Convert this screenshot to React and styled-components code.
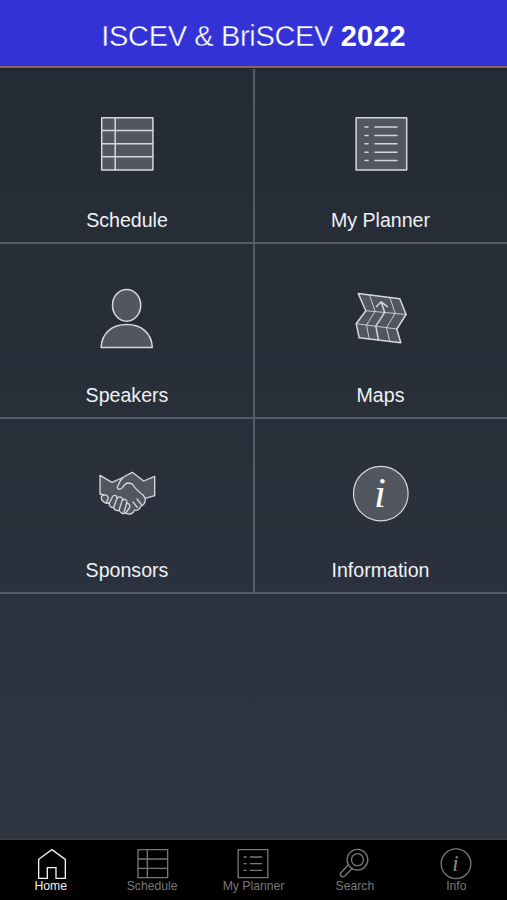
import React, { useState } from "react";
import styled, { createGlobalStyle } from "styled-components";

const GlobalStyle = createGlobalStyle`
  body {
    margin: 0;
    background: #2e3541;
  }
`;

const Container = styled.div`
  height: 100vh;
  min-height: 900px;
  display: flex;
  flex-direction: column;
  background: linear-gradient(#242a33, #2f3642);
  font-family: "Liberation Sans", Arial, sans-serif;
  overflow: hidden;
`;

const Header = styled.header`
  height: 66px;
  flex: none;
  display: flex;
  align-items: center;
  justify-content: center;
  background: #3232d6;
  border-bottom: 2px solid #8d6262;
  box-shadow: 0 1px 0 #1f2530;
`;

const Title = styled.h1`
  margin: 5px 0 0;
  font-size: 29px;
  font-weight: 400;
  line-height: 34px;
  letter-spacing: -0.35px;
  white-space: nowrap;
  color: #fff;
  -webkit-text-stroke: 0.4px #3232d6;
`;

const Year = styled.strong`
  font-weight: 700;
  letter-spacing: 0.1px;
  -webkit-text-stroke: 0;
`;

const Grid = styled.main`
  flex: 1;
  padding-top: 1px;
  display: grid;
  grid-template-columns: 255px 1fr;
  grid-template-rows: 175px 175px 175px;
`;

const Cell = styled.button`
  display: flex;
  flex-direction: column;
  align-items: center;
  padding: ${(props) => (props.$left ? "43px 0 0 1px" : "43px 1px 0 0")};
  border: none;
  border-bottom: 2px solid #565d68;
  border-right: ${(props) => (props.$left ? "2px solid #565d68" : "none")};
  background: none;
  font-family: inherit;
  cursor: pointer;
`;

const CellIcon = styled.svg`
  width: 64px;
  height: 64px;
  fill: #51565f;
  stroke: #d4d7dd;
  stroke-width: ${(props) => props.$stroke || 1.5};
  stroke-linejoin: round;
  stroke-linecap: round;
`;

const CellLabel = styled.span`
  margin-top: 33px;
  font-size: 19.6px;
  line-height: 23px;
  color: #eff1f5;
`;

const TabBar = styled.nav`
  height: 60px;
  flex: none;
  display: grid;
  grid-template-columns: repeat(5, 1fr);
  background: #000;
  border-top: 1px solid #3c3f45;
`;

const Tab = styled.button`
  display: flex;
  flex-direction: column;
  align-items: center;
  padding: 7px 0 0;
  border: none;
  background: none;
  font-family: inherit;
  color: ${(props) => (props.$active ? "#f2f2f2" : "#777")};
  cursor: pointer;
`;

const TabIcon = styled.svg`
  width: 34px;
  height: 34px;
  flex: none;
  fill: none;
  stroke: currentColor;
  stroke-width: 4;
`;

const TabLabel = styled.span`
  margin-top: -2px;
  font-size: 12.2px;
  line-height: 14px;
  white-space: nowrap;
`;

const InfoLetter = styled.text`
  font-family: "Liberation Serif", serif;
  font-style: italic;
  font-size: ${(props) => props.$size}px;
  fill: ${(props) => props.$color};
  stroke: none;
`;

const tiles = [
  {
    label: "Schedule",
    icon: (
      <CellIcon viewBox="0.5 0 64 64">
        <rect x="7.2" y="5.7" width="51.2" height="52.4" />
        <path d="M7.2 18.4h51.2M7.2 31.7h51.2M7.2 44.8h51.2M20.7 5.7v52.4" />
      </CellIcon>
    ),
  },
  {
    label: "My Planner",
    icon: (
      <CellIcon viewBox="0.5 0 64 64">
        <rect x="7.6" y="5.7" width="50.6" height="52.4" />
        <path d="M16.5 15h3M16.5 23.4h3M16.5 31.7h3M16.5 40.2h3M16.5 48.6h3M26.5 15h22M26.5 23.4h22M26.5 31.7h22M26.5 40.2h22M26.5 48.6h22" />
      </CellIcon>
    ),
  },
  {
    label: "Speakers",
    icon: (
      <CellIcon viewBox="0.5 0 64 64">
        <ellipse cx="32.1" cy="18.3" rx="14.1" ry="15.9" />
        <path d="M6.6 60.6C7.2 46 17.5 37.6 32.2 37.6S57.2 46 57.8 60.6Z" />
      </CellIcon>
    ),
  },
  {
    label: "Maps",
    icon: (
      <CellIcon viewBox="0.5 0 64 64">
        <path d="M9.7 6.5L51.3 11.7L57.6 27.5L48.3 42L52.3 55.7L10.7 50.8L7.7 36.7L17.3 23.7Z" />
        <path
          strokeWidth="0.9"
          d="M17.3 23.7L57.6 27.5M7.7 36.7L48.3 42M21 8L26.7 24.4L18 38L20.7 52M41.3 10.4L46.7 26.4L38 40.7L41.3 54.3"
        />
        <path
          fill="none"
          d="M32.7 15L36.2 25.4L27.3 39.2L30 52.8M28 19.6L32.7 14.8L38.8 19.6"
        />
      </CellIcon>
    ),
  },
  {
    label: "Sponsors",
    icon: (
      <CellIcon viewBox="46 21 192 192" $stroke={4}>
        <path d="M61 61L97 82L126 69L158 52L192 78L225 64V122L197 130C198 144 190 153 183 154C180 164 172 168 165 165C161 176 149 181 138 174C130 178 121 173 118 166C108 169 102 162 102 158C93 159 87 151 89 144C80 147 66 141 65 130C64 125 67 121 72 120L61 117Z" />
        <path
          fill="none"
          d="M130 68C120 77 116 88 113 97C113 105 123 104 129 97C133 90 139 84 146 84L158 87C165 100 178 111 190 120L197 130M72 120C79 119 85 122 86 129M89 144L98 126C103 117 116 122 111 132L102 158M111 132C119 120 132 127 127 138L118 166M127 138C133 128 144 134 141 144L133 172M141 146C149 144 153 152 149 159L138 174M86 129L80 143M160 141L173 157M172 132L185 149"
        />
      </CellIcon>
    ),
  },
  {
    label: "Information",
    icon: (
      <CellIcon viewBox="0.5 0 64 64" $stroke={1.2}>
        <circle cx="32.3" cy="31.6" r="27.3" />
        <InfoLetter x="25.4" y="45.3" $size={43} $color="#fff">
          i
        </InfoLetter>
      </CellIcon>
    ),
  },
];

const tabs = [
  {
    label: "Home",
    icon: (
      <TabIcon viewBox="101 51 102 102">
        <path d="M115 145V88L154.500 59L195 88V145H167V113H141V145Z" />
      </TabIcon>
    ),
  },
  {
    label: "Schedule",
    icon: (
      <TabIcon viewBox="405 51 102 102">
        <path d="M414 59H503V143H414ZM414 87H503M414 115H503M442 59V143" />
      </TabIcon>
    ),
  },
  {
    label: "My Planner",
    icon: (
      <TabIcon viewBox="109.5 51 102 102">
        <path d="M116 59H205V143H116ZM132 81H142M132 101H142M132 121H142M151 81H188M151 101H188M151 121H188" />
      </TabIcon>
    ),
  },
  {
    label: "Search",
    icon: (
      <TabIcon viewBox="413.7 51 102 102">
        <circle cx="472" cy="89" r="31" />
        <circle cx="472" cy="89" r="18" />
        <path d="M444 105L422 129C417 136 427 144 434 138L456 116" />
      </TabIcon>
    ),
  },
  {
    label: "Info",
    icon: (
      <TabIcon viewBox="118 51 102 102">
        <circle cx="169" cy="101" r="44.500" />
        <InfoLetter x="158" y="122" $size={68} $color="#8a8a8a">
          i
        </InfoLetter>
      </TabIcon>
    ),
  },
];

export default function App() {
  const [active, setActive] = useState("Home");

  return (
    <Container>
      <GlobalStyle />
      <Header>
        <Title>
          ISCEV &amp; BriSCEV <Year>2022</Year>
        </Title>
      </Header>
      <Grid>
        {tiles.map((tile, i) => (
          <Cell key={tile.label} $left={i % 2 === 0}>
            {tile.icon}
            <CellLabel>{tile.label}</CellLabel>
          </Cell>
        ))}
      </Grid>
      <TabBar>
        {tabs.map((tab) => (
          <Tab
            key={tab.label}
            $active={tab.label === active}
            onClick={() => setActive(tab.label)}
          >
            {tab.icon}
            <TabLabel>{tab.label}</TabLabel>
          </Tab>
        ))}
      </TabBar>
    </Container>
  );
}
